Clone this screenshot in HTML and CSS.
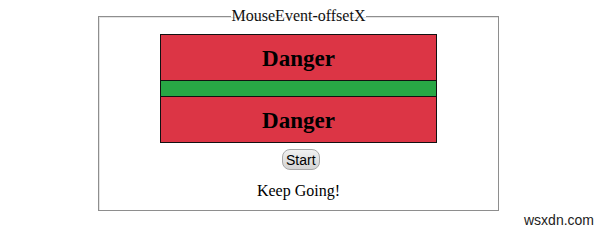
FILE: index.html
```html
<!DOCTYPE html>
<html lang="en">
<head>
    <meta charset="UTF-8">
    <title>MouseEvent-offsetX</title>
    <link rel="stylesheet" href="styles.css">
</head>
<body>

    <fieldset class="demo">
        <legend>MouseEvent-offsetX</legend>
        <div class="track">
            <div class="zone danger">Danger</div>
            <div class="zone safe"></div>
            <div class="zone danger">Danger</div>
        </div>
        <button class="start-btn">Start</button>
        <div class="status">Keep Going!</div>
    </fieldset>

    <div class="watermark">wsxdn.com</div>

</body>
</html>
```

FILE: styles.css
```css
body {
    margin: 0;
    font-family: "Liberation Serif", "Times New Roman", serif;
    background-color: #fff;
    color: #000;
}
.demo {
    box-sizing: border-box;
    width: 401px;
    height: 204px;
    margin: 7px 0 0 98px;
    padding: 0;
    border: 1px solid #8e8e8e;
    box-shadow: inset 1px 1px 0 #e4e4e4;
    text-align: center;
    font-size: 16px;
}
.demo legend {
    padding: 0 1px;
    font-size: 16px;
    line-height: 18px;
    color: #111;
}
.track {
    box-sizing: border-box;
    width: 277px;
    margin: 9px auto 0 61px;
    border: 1px solid #111;
}
.zone {
    font-weight: bold;
    font-size: 23px;
}
.zone.danger {
    height: 45px;
    line-height: 48px;
    background-color: #dc3545;
}
.zone.safe {
    height: 15px;
    background-color: #28a745;
    border-top: 1px solid #111;
    border-bottom: 1px solid #111;
}
.start-btn {
    display: block;
    margin: 6px auto 0 183px;
    height: 21px;
    padding: 0 3px;
    font-family: "Liberation Sans", Arial, sans-serif;
    font-size: 14px;
    color: #000;
    background: linear-gradient(#f0f0f0, #d4d4d4);
    border: 1px solid #a8a8a8;
    border-radius: 8px;
}
.status {
    margin-top: 12px;
    font-size: 16px;
}
.watermark {
    position: absolute;
    left: 524px;
    top: 212px;
    font-family: "Liberation Sans", Arial, sans-serif;
    font-size: 14px;
    color: #222;
}
```
